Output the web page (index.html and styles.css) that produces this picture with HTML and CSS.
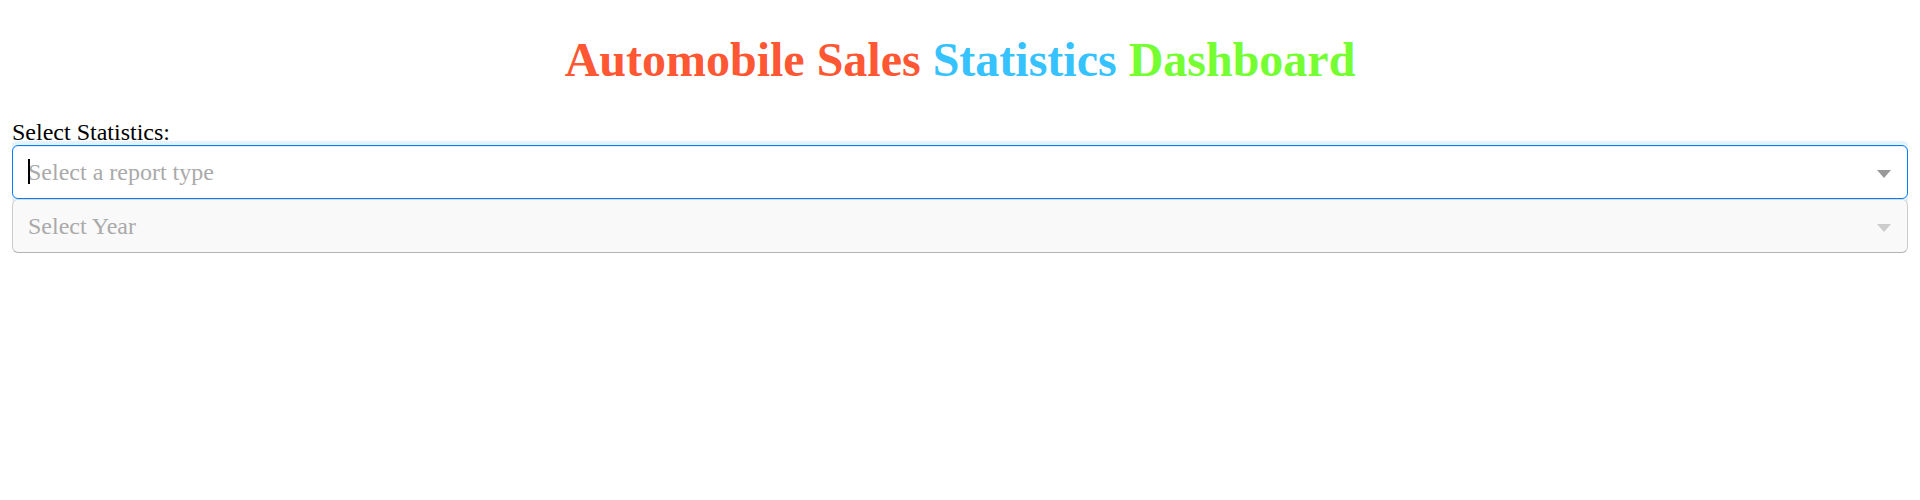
FILE: index.html
```html
<!DOCTYPE html>
<html>
<head>
<meta charset="utf-8">
<title>Automobile Sales Statistics Dashboard</title>
<link rel="stylesheet" href="styles.css">
</head>
<body>
<h1 class="title"><span class="t-red">Automobile Sales</span> <span class="t-blue">Statistics</span> <span class="t-green">Dashboard</span></h1>
<div class="field">
  <label class="field-label">Select Statistics:</label>
  <div class="select is-focused">
    <div class="select-control">
      <div class="select-value">
        <span class="caret"></span>
        <span class="placeholder">Select a report type</span>
      </div>
      <span class="arrow-zone"><span class="arrow"></span></span>
    </div>
  </div>
  <div class="select is-disabled">
    <div class="select-control">
      <div class="select-value">
        <span class="placeholder">Select Year</span>
      </div>
      <span class="arrow-zone"><span class="arrow"></span></span>
    </div>
  </div>
</div>
</body>
</html>
```
FILE: styles.css
```css
html, body {
  background: #ffffff;
}
body {
  margin: 12px;
  font-family: "Liberation Serif", "Times New Roman", serif;
  color: #000;
}
.title {
  margin: 20px 0 32px;
  font-size: 48px;
  font-weight: bold;
  text-align: center;
  line-height: 55px;
}
.t-red { color: #FF5733; }
.t-blue { color: #36C2FF; }
.t-green { color: #75FF33; }

.field {
  display: flex;
  flex-direction: column;
}
.field-label {
  font-size: 24px;
  line-height: 26px;
}
.select-control {
  display: flex;
  align-items: center;
  box-sizing: border-box;
  height: 54px;
  border: 1px solid #ccc;
  border-color: #d9d9d9 #ccc #b3b3b3;
  border-radius: 6px;
  background: #fff;
}
.is-focused .select-control {
  border-color: #007eff;
  box-shadow: inset 0 1px 1px rgba(0,0,0,.075), 0 0 0 4px rgba(0,126,255,.1);
}
.is-disabled .select-control {
  background: #f9f9f9;
}
.select-value {
  position: relative;
  flex: 1;
  display: flex;
  align-items: center;
  padding-left: 15px;
  height: 100%;
}
.placeholder {
  font-size: 24px;
  line-height: 51px;
  color: #aaa;
}
.caret {
  position: absolute;
  left: 15px;
  top: 13px;
  width: 2px;
  height: 25px;
  background: #000;
}
.arrow-zone {
  box-sizing: border-box;
  width: 38px;
  padding-right: 8px;
  display: flex;
  justify-content: center;
  align-items: center;
  height: 100%;
}
.arrow {
  width: 0;
  height: 0;
  border-style: solid;
  border-width: 8px 7.5px 0;
  border-color: #999 transparent transparent;
  margin-top: 3px;
}
.is-disabled .arrow {
  border-top-color: #ccc;
}
```
